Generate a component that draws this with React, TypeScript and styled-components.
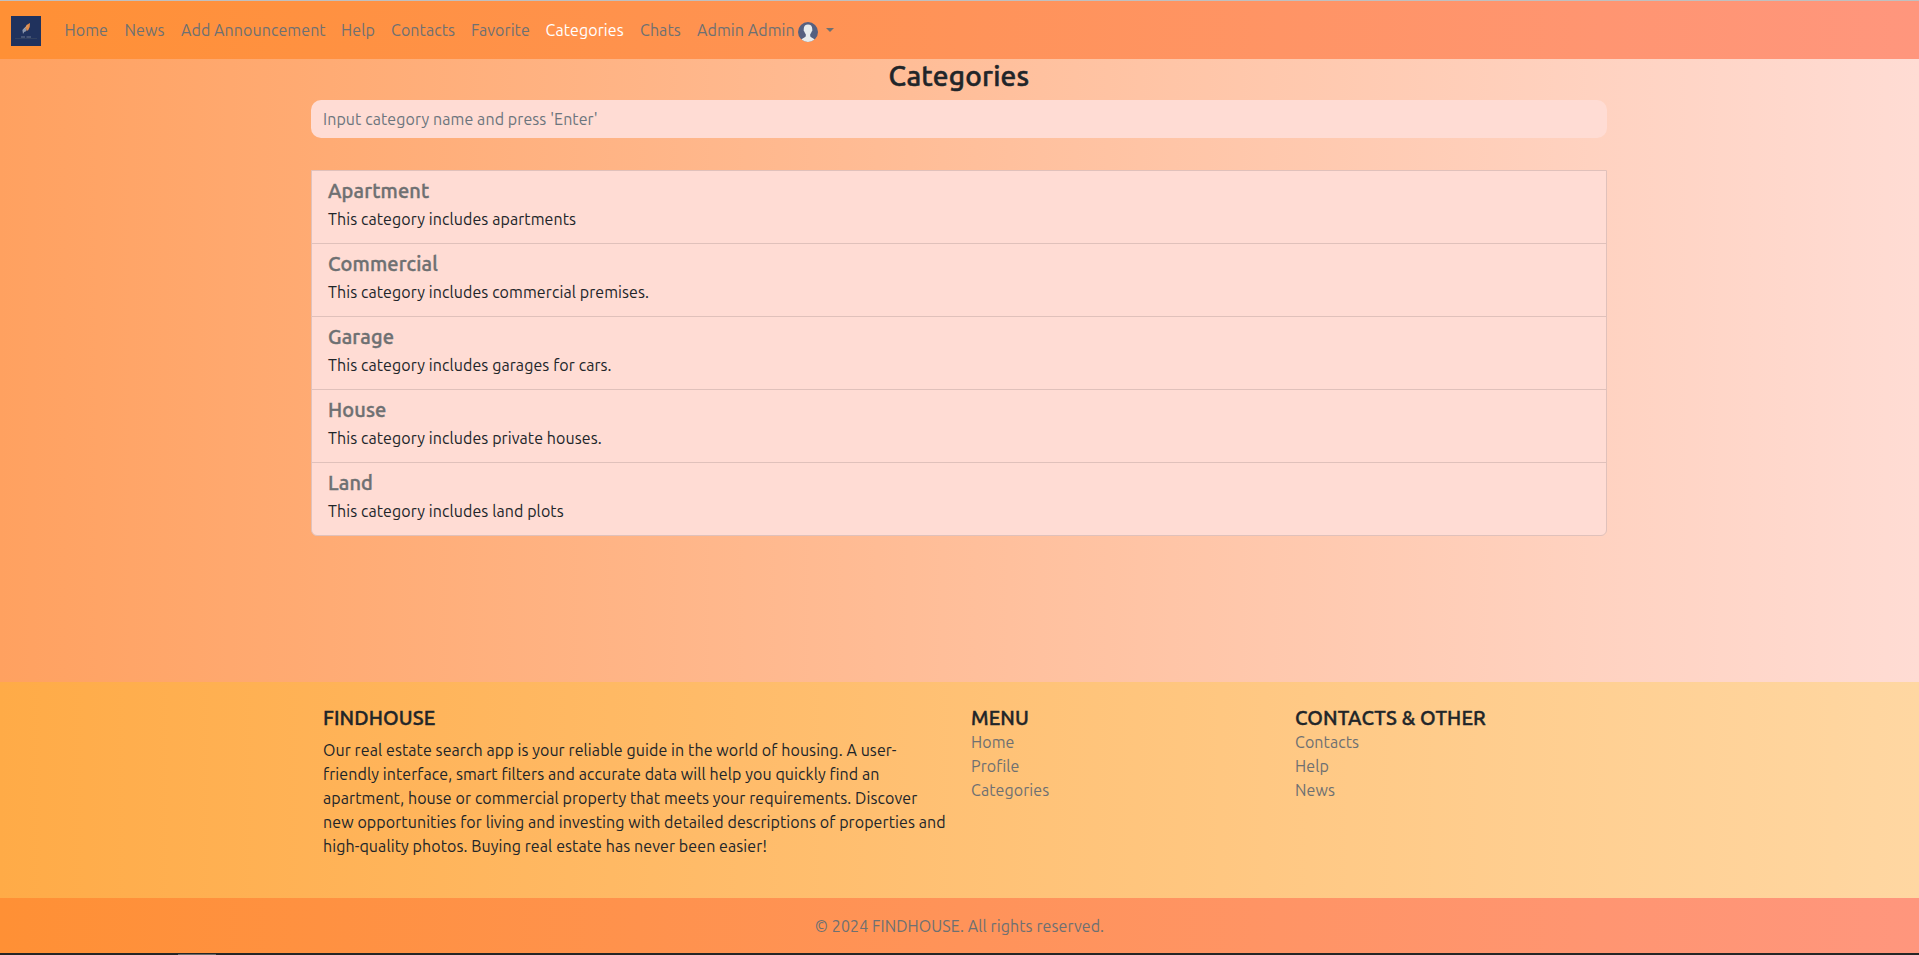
import React from "react";
import styled, { createGlobalStyle } from "styled-components";

const Global = createGlobalStyle`
  *, *::before, *::after { box-sizing: border-box; }
  html, body, #root { height: 100%; }
  body {
    margin: 0;
    overflow: hidden;
    font-family: Ubuntu, "Noto Sans", sans-serif;
    font-size: 16px;
    line-height: 1.5;
    letter-spacing: 0.085px;
    font-feature-settings: "liga" 1;
    color: #212529;
  }
  h3, h5, p, ul { margin: 0; padding: 0; }
  a { color: inherit; text-decoration: none; }
`;

const Page = styled.div`
  height: 955px;
  display: flex;
  flex-direction: column;
  border-top: 1px solid #c0c0c0;
  background: linear-gradient(to right, #ffa160, #ffdcd4);
`;

const Navbar = styled.nav`
  height: 58px;
  flex: none;
  display: flex;
  align-items: center;
  padding: 0 11px;
  background: linear-gradient(to right, #ff9035, #ff967d);
`;

const Logo = styled.svg`
  width: 30px;
  height: 30px;
  flex: none;
  margin: 2px 15.5px 0 0;
`;

const NavLink = styled.a<{ $w: number; $active?: boolean }>`
  display: flex;
  align-items: center;
  width: ${(p) => p.$w}px;
  padding-left: 8px;
  white-space: nowrap;
  color: ${(p) => (p.$active ? "#fff" : "#6e7072")};
`;

const Avatar = styled.svg`
  width: 20px;
  height: 20px;
  flex: none;
  margin: 4px 8px 0 3px;
`;

const Caret = styled.i`
  border-top: 4.8px solid #6e7072;
  border-left: 4.8px solid transparent;
  border-right: 4.8px solid transparent;
`;

const Container = styled.main`
  width: 1296px;
  margin: 0 auto 0 311px;
  flex: 1;
`;

const Title = styled.h3`
  font-size: 28px;
  font-weight: 500;
  line-height: 33px;
  letter-spacing: 0.2px;
  -webkit-text-stroke: 0.5px currentColor;
  text-align: center;
`;

const Search = styled.input`
  display: block;
  width: 100%;
  height: 38px;
  margin: 8px 0 32px;
  padding: 6px 12px;
  border: 0;
  border-radius: 10px;
  background: #ffdcd4;
  font: inherit;
  letter-spacing: inherit;
  &::placeholder { color: #6c757d; opacity: 1; }
`;

const List = styled.ul`
  list-style: none;
  border: 1px solid #e0c1bb;
  border-radius: 0 0 6px 6px;
  background: #ffdcd4;
`;

const Item = styled.li`
  height: 73px;
  padding: 8px 16px;
  &:first-child { height: 72px; }
  & + & { border-top: 1px solid #e0c1bb; }
`;

const Heading = styled.h5<{ $muted?: boolean; $gap?: number }>`
  margin-bottom: ${(p) => p.$gap ?? 0}px;
  font-size: 20px;
  font-weight: 500;
  line-height: 24px;
  letter-spacing: 0.13px;
  -webkit-text-stroke: 0.4px currentColor;
  color: ${(p) => (p.$muted ? "#6e7072" : "#212529")};
`;

const Footer = styled.footer`
  height: 216px;
  flex: none;
  padding-top: 24px;
  background: linear-gradient(to right, #ffab47, #ffd7a2);
`;

const Columns = styled.div`
  width: 1296px;
  margin: 0 auto 0 311px;
  display: grid;
  grid-template-columns: 2fr 1fr 1fr;
`;

const Column = styled.section`
  padding: 0 12px;
`;

const Line = styled.span`
  display: block;
  white-space: nowrap;
`;

const FooterLink = styled.a`
  display: block;
  color: #6e7072;
`;

const Copyright = styled.div`
  height: 55px;
  flex: none;
  display: flex;
  align-items: center;
  justify-content: center;
  color: #6e7072;
  background: linear-gradient(to right, #ff9035, #ff967d);
`;

const BottomEdge = styled.div`
  height: 2px;
  flex: none;
  padding: 1px 0 0 178px;
  background: #262626;
`;

const EdgeMark = styled.div`
  width: 38px;
  height: 1px;
  background: #6a6a6a;
`;

const categories = [
  ["Apartment", "This category includes apartments"],
  ["Commercial", "This category includes commercial premises."],
  ["Garage", "This category includes garages for cars."],
  ["House", "This category includes private houses."],
  ["Land", "This category includes land plots"],
];

const about = [
  "Our real estate search app is your reliable guide in the world of housing. A user-",
  "friendly interface, smart filters and accurate data will help you quickly find an",
  "apartment, house or commercial property that meets your requirements. Discover",
  "new opportunities for living and investing with detailed descriptions of properties and",
  "high-quality photos. Buying real estate has never been easier!",
];

const nav: [string, number][] = [
  ["Home", 60], ["News", 56.5], ["Add Announcement", 160], ["Help", 50], ["Contacts", 80],
  ["Favorite", 74.5], ["Categories", 94.5], ["Chats", 57],
];

export default function App() {
  return (
    <Page>
      <Global />
      <Navbar>
        <Logo viewBox="0 0 30 30">
          <rect width="30" height="30" fill="#20325d" />
          <path d="M12 18l-.6-4 2.200-2.600 2.200 1.600-.8 2.200-1.800.8z" fill="#8c98ae" />
          <path d="M14 12l1.500-3 3.500-2-.3 4-1.500 3.200-1.600.5-.2-1.700z" fill="#e58b45" />
          <path d="M13.500 12.500l3.500-3" stroke="#b9b3ac" strokeWidth=".7" />
          <path d="M10 21h4m1.500 0h4.500" stroke="#6b7690" strokeWidth="1" />
          <path d="M4 22.500h22" stroke="#3a4761" strokeWidth=".7" />
        </Logo>
        {nav.map(([label, w]) => (
          <NavLink key={label} href="#" $w={w} $active={label === "Categories"}>{label}</NavLink>
        ))}
        <NavLink href="#" $w={150}>
          Admin Admin
          <Avatar viewBox="0 0 20 20">
            <circle cx="10" cy="10" r="10" fill="#556080" />
            <path d="M10 2.500c-2.700 0-4.300 1.700-4.200 4.300 0 .8-.2 1.100-.1 1.700.1.700.6.900.8 1.500.3 1 .8 1.700 1.300 2.200v2.100c-.5 1.200-2.900 1.600-4.400 3.200a10 10 0 0 0 13.200 0c-1.500-1.600-3.900-2-4.400-3.200v-2.100c.5-.5 1-1.200 1.300-2.200.2-.6.700-.8.8-1.500.1-.6-.1-.9-.1-1.700.1-2.600-1.500-4.300-4.200-4.300z" fill="#e7eced" />
          </Avatar>
          <Caret />
        </NavLink>
      </Navbar>
      <Container>
        <Title>Categories</Title>
        <Search placeholder="Input category name and press 'Enter'" />
        <List>
          {categories.map(([name, text]) => (
            <Item key={name}>
              <Heading $muted $gap={4}>{name}</Heading>
              <p>{text}</p>
            </Item>
          ))}
        </List>
      </Container>
      <Footer>
        <Columns>
          <Column>
            <Heading $gap={8}>FINDHOUSE</Heading>
            <p>{about.map((l) => <Line key={l}>{l}</Line>)}</p>
          </Column>
          <Column>
            <Heading>MENU</Heading>
            <FooterLink>Home</FooterLink><FooterLink>Profile</FooterLink><FooterLink>Categories</FooterLink>
          </Column>
          <Column>
            <Heading>CONTACTS &amp; OTHER</Heading>
            <FooterLink>Contacts</FooterLink><FooterLink>Help</FooterLink><FooterLink>News</FooterLink>
          </Column>
        </Columns>
      </Footer>
      <Copyright>© 2024 FINDHOUSE. All rights reserved.</Copyright>
      <BottomEdge><EdgeMark /></BottomEdge>
    </Page>
  );
}
